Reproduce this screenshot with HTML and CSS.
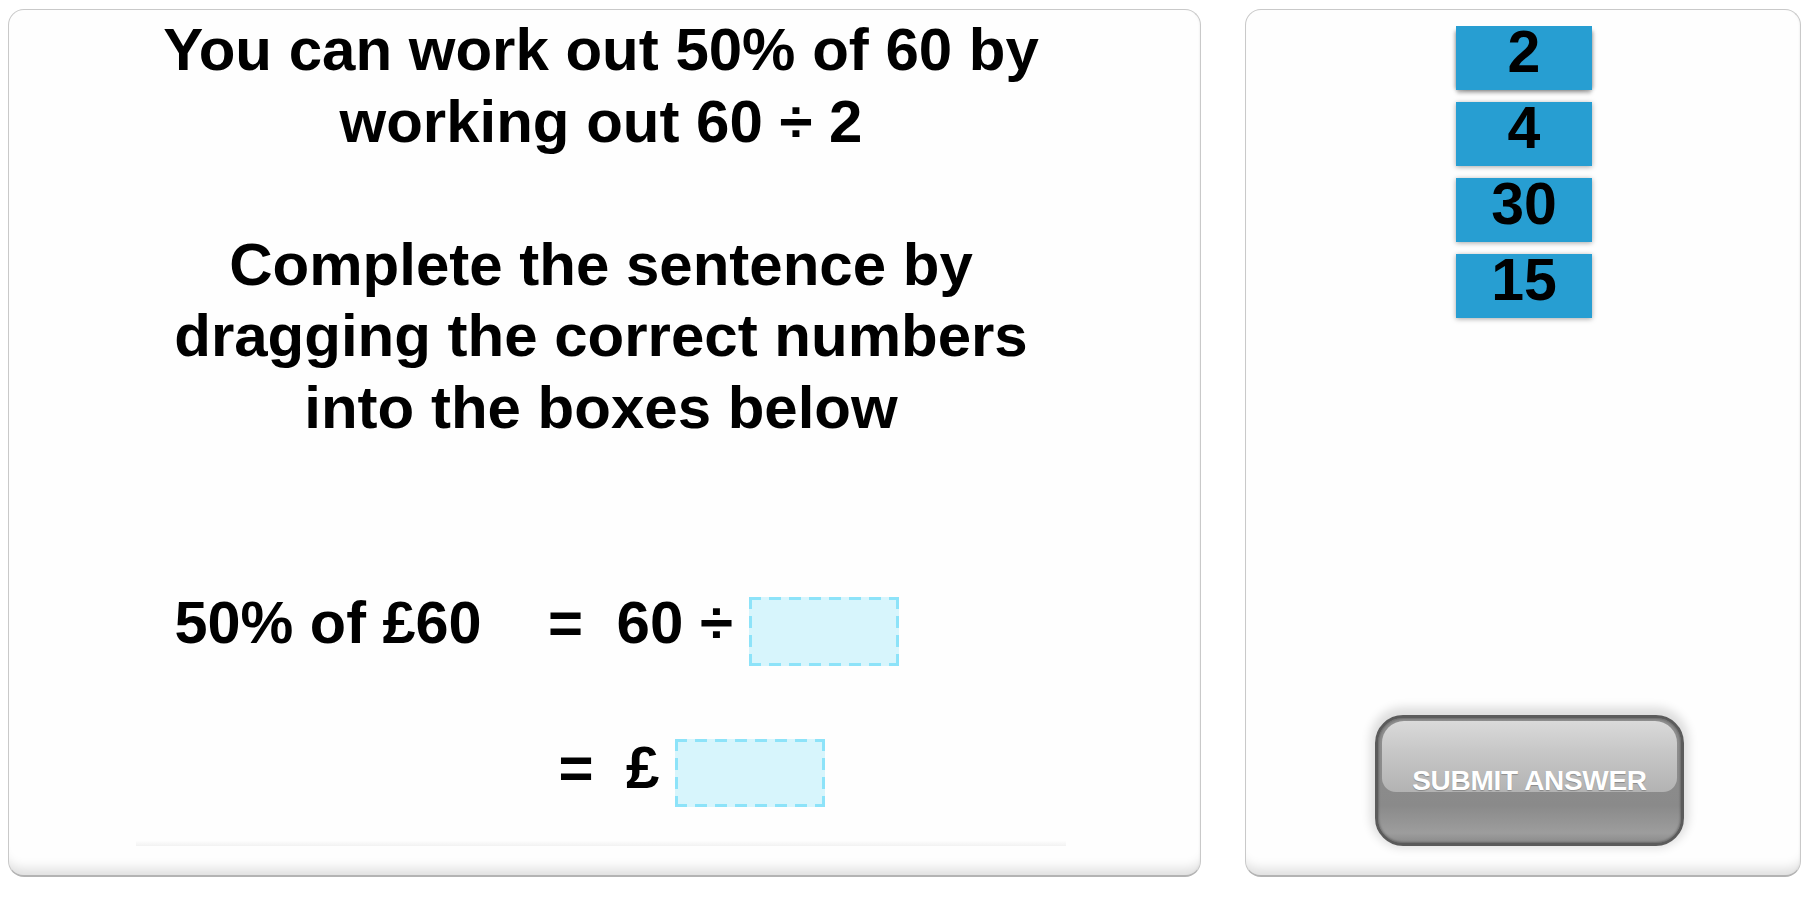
FILE: index.html
```html
<!DOCTYPE html>
<html lang="en">
<head>
<meta charset="utf-8">
<title>50% of 60</title>
<link rel="stylesheet" href="styles.css">
</head>
<body>
<main class="stage">
  <section class="panel panel-question">
    <div class="question-area">
      <p class="prompt">You can work out 50% of 60 by working out 60 ÷ 2</p>
      <p class="prompt prompt-gap">Complete the sentence by dragging the correct numbers into the boxes below</p>
      <div class="equation">
        <div class="eq-row eq-row-1">
          <span class="eq-lhs">50% of £60</span>
          <span class="eq-sign">=</span>
          <span class="eq-term">60 ÷</span>
          <span class="drop"></span>
        </div>
        <div class="eq-row eq-row-2">
          <span class="eq-sign">=</span>
          <span class="eq-term">£</span>
          <span class="drop"></span>
        </div>
      </div>
      <div class="rule"></div>
    </div>
  </section>
  <section class="panel panel-answers">
    <div class="tiles">
      <div class="tile">2</div>
      <div class="tile">4</div>
      <div class="tile">30</div>
      <div class="tile">15</div>
    </div>
    <button class="submit" type="button"><span class="submit-label">SUBMIT ANSWER</span></button>
  </section>
</main>
</body>
</html>
```

FILE: styles.css
```css
* {
  box-sizing: border-box;
}

html, body {
  margin: 0;
  background: #ffffff;
}

body {
  font-family: "Liberation Sans", Arial, sans-serif;
  color: #000;
}

.stage {
  display: flex;
  gap: 44px;
  padding: 9px 0 0 8px;
}

.panel {
  height: 868px;
  background: #fefefe;
  border: 1px solid #c9c9c9;
  border-bottom: 2px solid #b3b3b3;
  border-radius: 16px;
  box-shadow:
    inset 0 -16px 12px -10px rgba(0, 0, 0, 0.13),
    inset -2px 0 3px -2px rgba(0, 0, 0, 0.08);
}

.panel-question {
  width: 1193px;
}

.panel-answers {
  width: 556px;
  display: flex;
  flex-direction: column;
}

/* ---------- question ---------- */

.question-area {
  margin-left: 127px;
  width: 930px;
  padding-top: 4px;
}

.prompt {
  margin: 0;
  text-align: center;
  font-weight: bold;
  font-size: 60px;
  line-height: 71.5px;
}

.prompt-gap {
  margin-top: 71.5px;
}

.equation {
  margin-top: 145.5px;
  font-weight: bold;
  font-size: 60px;
  line-height: 68px;
}

.eq-row {
  display: flex;
  align-items: flex-start;
  white-space: nowrap;
}

.eq-row-1 {
  padding-left: 38.5px;
}

.eq-row-1 .eq-lhs {
  font-size: 59.4px;
}

.eq-row-1 .eq-sign {
  margin-left: 66.5px;
}

.eq-row-1 .eq-term {
  margin-left: 33.5px;
}

.eq-row-1 .drop {
  margin-left: 16px;
  margin-top: 8.5px;
  height: 69px;
}

.eq-row-2 {
  margin-top: 67.5px;
  padding-left: 422.5px;
}

.eq-row-2 .eq-term {
  margin-left: 32.5px;
}

.eq-row-2 .drop {
  margin-left: 15.5px;
  margin-top: 5.5px;
  height: 68px;
}

.drop {
  display: block;
  width: 150px;
  background:
    repeating-linear-gradient(90deg, #8de3f9 0 12px, transparent 12px 20px) top left / 100% 3px no-repeat,
    repeating-linear-gradient(90deg, #8de3f9 0 12px, transparent 12px 20px) bottom left / 100% 3px no-repeat,
    repeating-linear-gradient(180deg, #8de3f9 0 12px, transparent 12px 19px) top left / 3px 100% no-repeat,
    repeating-linear-gradient(180deg, #8de3f9 0 12px, transparent 12px 19px) top right / 3px 100% no-repeat,
    #d7f5fc;
}

.rule {
  margin-top: 33px;
  height: 6px;
  background: linear-gradient(#ffffff, #f2f2f2);
}

/* ---------- answers ---------- */

.tiles {
  margin-top: 16px;
  margin-left: 2px;
  align-self: center;
  display: flex;
  flex-direction: column;
  gap: 12px;
}

.tile {
  width: 136px;
  height: 64px;
  background: #279ed2;
  box-shadow: 0 1px 5px rgba(0, 0, 0, 0.35);
  text-align: center;
  font-weight: bold;
  font-size: 59px;
  line-height: 52px;
  color: #000;
}

.tile:first-child {
  box-shadow:
    0 4px 4px -1px rgba(0, 0, 0, 0.3),
    4px 2px 4px -3px rgba(0, 0, 0, 0.3),
    -4px 2px 4px -3px rgba(0, 0, 0, 0.3);
}

.submit {
  position: relative;
  align-self: flex-start;
  margin-top: 397px;
  margin-left: 129px;
  width: 309px;
  height: 131px;
  padding: 0;
  border: 3px solid #5b5b5b;
  border-radius: 28px;
  background: linear-gradient(#8f8f8f 0%, #8a8a8a 70%, #9d9d9d 92%, #8a8a8a 100%);
  box-shadow:
    0 -3px 10px 5px rgba(0, 0, 0, 0.13),
    inset 0 0 2px 1px rgba(0, 0, 0, 0.25);
  display: flex;
  align-items: center;
  justify-content: center;
  font-family: "Liberation Sans", Arial, sans-serif;
  cursor: pointer;
}

.submit::before {
  content: "";
  position: absolute;
  top: 3px;
  left: 4px;
  right: 4px;
  height: 57%;
  border-radius: 22px 22px 14px 14px;
  background: linear-gradient(#dadada 0%, #c6c6c6 45%, #b3b3b3 100%);
}

.submit-label {
  position: relative;
  color: #ffffff;
  font-weight: bold;
  font-size: 28px;
  letter-spacing: -0.3px;
  text-shadow: 0 1px 1px rgba(0, 0, 0, 0.25);
}
```
